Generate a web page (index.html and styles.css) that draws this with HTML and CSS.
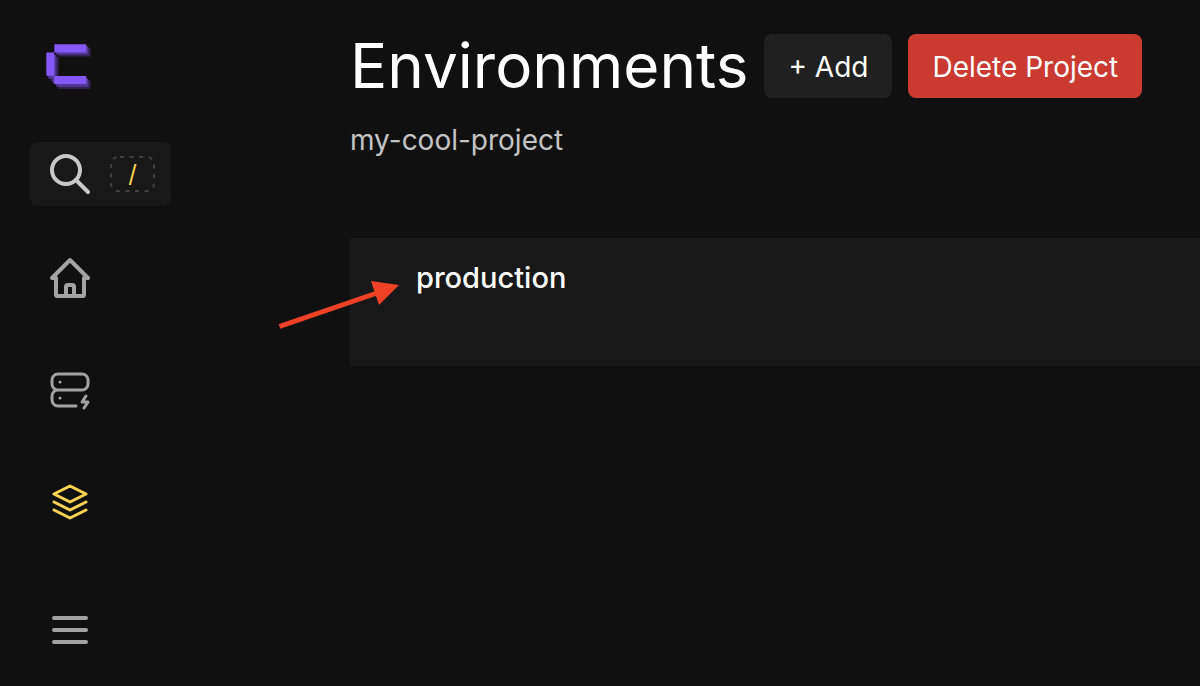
FILE: index.html
```html
<!DOCTYPE html>
<html lang="en">
<head>
<meta charset="utf-8">
<meta name="viewport" content="width=device-width, initial-scale=1">
<title>Environments</title>
<link rel="stylesheet" href="styles.css">
</head>
<body>
<div class="app">
  <nav class="sidebar" aria-label="Main">
    <a class="logo" href="#" aria-label="Dashboard">
      <svg width="46" height="46" viewBox="0 0 46 46" aria-hidden="true">
        <path fill="#34235a" d="M12.5 4.3h32v8.2h-32v24h32v8.2h-32v-4h-4v-4h-4v-24h8z"/>
        <path fill="#553896" d="M10.3 2.3h32v8.2h-32v24h32v8.2h-32v-4h-4v-4h-4v-24h8z"/>
        <path fill="#8557f6" d="M8.3.3h32v8.2h-32zM.3 8.5h8v23.3h-8zM8.3 32h32v8h-32z"/>
      </svg>
    </a>
    <button class="search" type="button" aria-label="Search">
      <svg width="42" height="42" viewBox="0 0 42 42" fill="none" stroke="currentColor" stroke-width="4" stroke-linecap="round" aria-hidden="true">
        <circle cx="16" cy="17" r="14"/><path d="m26 27 12 12"/>
      </svg>
      <kbd class="key">
        <svg class="outline" width="45" height="36" viewBox="0 0 45 36" fill="none" stroke="#404040" stroke-width="2" stroke-dasharray="4 5.6" stroke-dashoffset="-2" aria-hidden="true">
          <rect x="1" y="1" width="43" height="34" rx="7"/>
        </svg>
        <span class="slash">/</span>
      </kbd>
    </button>
    <a class="item" href="#" aria-label="Home">
      <svg width="48" height="48" viewBox="0 0 24 24" fill="none" stroke="currentColor" stroke-width="2" stroke-linecap="round" stroke-linejoin="round" aria-hidden="true">
        <path d="M5 12H3l9-9 9 9h-2M5 12v8.2a.8.8 0 0 0 .8.8h12.4a.8.8 0 0 0 .8-.8V12M10 21v-4.6a.9.9 0 0 1 .9-.9h2.2a.9.9 0 0 1 .9.9V21"/>
      </svg>
    </a>
    <a class="item" href="#" aria-label="Servers">
      <svg width="48" height="48" viewBox="0 0 24 24" fill="none" stroke="currentColor" stroke-width="1.5" stroke-linecap="round" stroke-linejoin="round" aria-hidden="true">
        <path d="M6 4h12a3 3 0 0 1 3 3v2a3 3 0 0 1-3 3H6a3 3 0 0 1-3-3V7a3 3 0 0 1 3-3zM15 20H6a3 3 0 0 1-3-3v-2a3 3 0 0 1 3-3h12M7 8v.01M7 16v.01M20 15l-2 3h3l-2 3"/>
      </svg>
    </a>
    <a class="item active" href="#" aria-label="Projects">
      <svg width="48" height="48" viewBox="0 0 24 24" fill="none" stroke="currentColor" stroke-width="1.5" stroke-linecap="round" stroke-linejoin="round" aria-hidden="true">
        <path d="m12 4-8 4 8 4 8-4zM4 12l8 4 8-4M4 16l8 4 8-4"/>
      </svg>
    </a>
    <button class="item menu" type="button" aria-label="Menu">
      <svg width="48" height="48" viewBox="0 0 24 24" fill="none" stroke="currentColor" stroke-width="2" stroke-linecap="round" aria-hidden="true">
        <path d="M4 6h16M4 12h16M4 18h16"/>
      </svg>
    </button>
  </nav>
  <main class="content">
    <header class="heading">
      <h1 class="title">Environments</h1>
      <button class="button" type="button">+ Add</button>
      <button class="button danger" type="button">Delete Project</button>
    </header>
    <p class="project">my-cool-project</p>
    <a class="card" href="#">production
      <svg class="arrow" width="122" height="50" viewBox="0 0 122 50" aria-hidden="true">
        <path d="M.5 46.5 101 12" stroke="#ee4125" stroke-width="5"/>
        <path d="M120 5 92 1l8 24z" fill="#ee4125"/>
      </svg>
    </a>
  </main>
</div>
</body>
</html>
```
FILE: styles.css
```css
* { box-sizing: border-box; }

body {
  margin: 0;
  background: #101010;
  color: #fff;
  font: 400 28px/40px Inter, "Liberation Sans", sans-serif;
}

button { border: 0; font: inherit; color: inherit; cursor: pointer; }
a { color: inherit; text-decoration: none; }
svg { display: block; }

.app { display: flex; min-height: 100vh; overflow-x: hidden; }

.sidebar {
  flex: none;
  display: flex;
  flex-direction: column;
  align-items: flex-start;
  width: 350px;
  padding: 44px 30px 32px;
  color: #a3a3a3;
}

.logo { margin: 0 16px 52px; }

.search {
  display: flex;
  align-items: center;
  gap: 18px;
  height: 64px;
  margin-bottom: 48px;
  padding: 0 16px 0 20px;
  border-radius: 8px;
  background: #181818;
  color: #c8c8c8;
}

.key {
  display: grid;
  place-items: center;
  color: #fcd452;
  font: 400 24px/36px Inter, "Liberation Sans", sans-serif;
}

.outline, .slash { grid-area: 1 / 1; }

.item { margin: 0 16px 64px; padding: 0; background: none; }
.active { color: #fcd452; }
.menu { margin: 16px 16px 0; }

.content { flex: 1; min-width: 0; padding-top: 32px; }

.heading { display: flex; align-items: center; gap: 16px; }

.title { margin: 0; font-size: 62px; font-weight: 400; line-height: 68px; white-space: nowrap; }

.button {
  height: 64px;
  padding: 2px 24px 0;
  border-radius: 8px;
  background: #202020;
  white-space: nowrap;
}

.danger { background: #ca3a31; }

.project { margin: 20px 0 78px; color: #c4c4c4; }

.card {
  position: relative;
  display: block;
  min-height: 128px;
  padding: 20px 66px;
  background: #181818;
  font-size: 29px;
  font-weight: 500;
}

.arrow { position: absolute; left: -71px; top: 42px; }
```
